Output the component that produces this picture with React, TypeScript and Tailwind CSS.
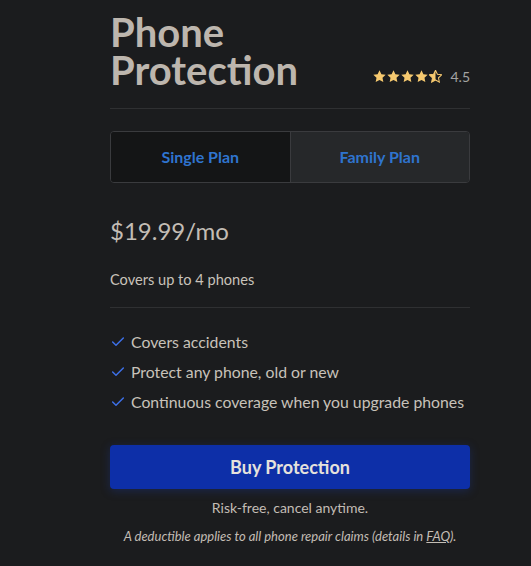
import { Check } from 'lucide-react';

function Stars() {
  const star = 'M12 2.5l2.9 6.1 6.6.8-4.9 4.6 1.3 6.6L12 17.3l-5.9 3.3 1.3-6.6-4.9-4.6 6.6-.8z';
  return (
    <div className="flex items-center gap-[1px]">
      {[0, 1, 2, 3].map((i) => (
        <svg key={i} width="13" height="13" viewBox="2 2 20 20">
          <path d={star} fill="#f6c96f" />
        </svg>
      ))}
      <svg width="13" height="13" viewBox="2 2 20 20">
        <defs>
          <clipPath id="half">
            <rect x="0" y="0" width="12" height="24" />
          </clipPath>
        </defs>
        <path d={star} fill="none" stroke="#f6c96f" strokeWidth="1.6" />
        <path d={star} fill="#f6c96f" clipPath="url(#half)" />
      </svg>
    </div>
  );
}

export default function App() {
  const features = [
    'Covers accidents',
    'Protect any phone, old or new',
    'Continuous coverage when you upgrade phones',
  ];

  return (
    <div className="w-[531px] h-[566px] overflow-hidden bg-[#1b1c1e] font-['Lato',sans-serif]">
      <div className="w-[360px] ml-[110px] pt-[13px]">
        {/* Header */}
        <div className="flex items-end justify-between pb-[19px] border-b border-[#2f3032]">
          <h1 className="text-[40px] leading-[38px] font-bold text-[#bdb6ae]">
            Phone
            <br />
            Protection
          </h1>
          <div className="flex items-center gap-[8px] mb-[2px]">
            <Stars />
            <span className="text-[14px] text-[#a3a3a3]">4.5</span>
          </div>
        </div>

        {/* Plan tabs */}
        <div className="mt-[22px] flex h-[52px] rounded-[4px] border border-[#3a3b3e] overflow-hidden">
          <button className="flex-1 bg-[#141516] text-[#2f74cf] font-bold text-[16px] border-r border-[#3a3b3e]">
            Single Plan
          </button>
          <button className="flex-1 bg-[#26282a] text-[#2f74cf] font-bold text-[16px]">
            Family Plan
          </button>
        </div>

        {/* Price */}
        <div className="mt-[33px] text-[24px] leading-[30px] text-[#c3bdb5]">$19.99/mo</div>
        <div className="mt-[24px] pb-[17px] text-[14.6px] leading-[20px] text-[#c8c2ba] border-b border-[#2f3032]">
          Covers up to 4 phones
        </div>

        {/* Features */}
        <ul className="mt-[24px] flex flex-col gap-[10px]">
          {features.map((f) => (
            <li key={f} className="flex items-center gap-[5px] text-[15.8px] leading-[20px] text-[#c8c2ba]">
              <Check size={16} strokeWidth={2.2} className="text-[#3d70e8]" />
              {f}
            </li>
          ))}
        </ul>

        {/* CTA */}
        <button className="mt-[33px] w-full h-[44px] rounded-[4px] bg-[#0d2fa8] text-[#e6e2dc] font-bold text-[18px] shadow-[0_2px_10px_rgba(30,60,160,0.35)]">
          Buy Protection
        </button>
        <p className="mt-[9px] text-center text-[14px] leading-[20px] text-[#c3bdb5]">
          Risk-free, cancel anytime.
        </p>
        <p className="mt-[10px] text-center text-[13px] leading-[16px] italic text-[#c3bdb5]">
          A deductible applies to all phone repair claims (details in <span className="underline">FAQ</span>).
        </p>
      </div>
    </div>
  );
}
